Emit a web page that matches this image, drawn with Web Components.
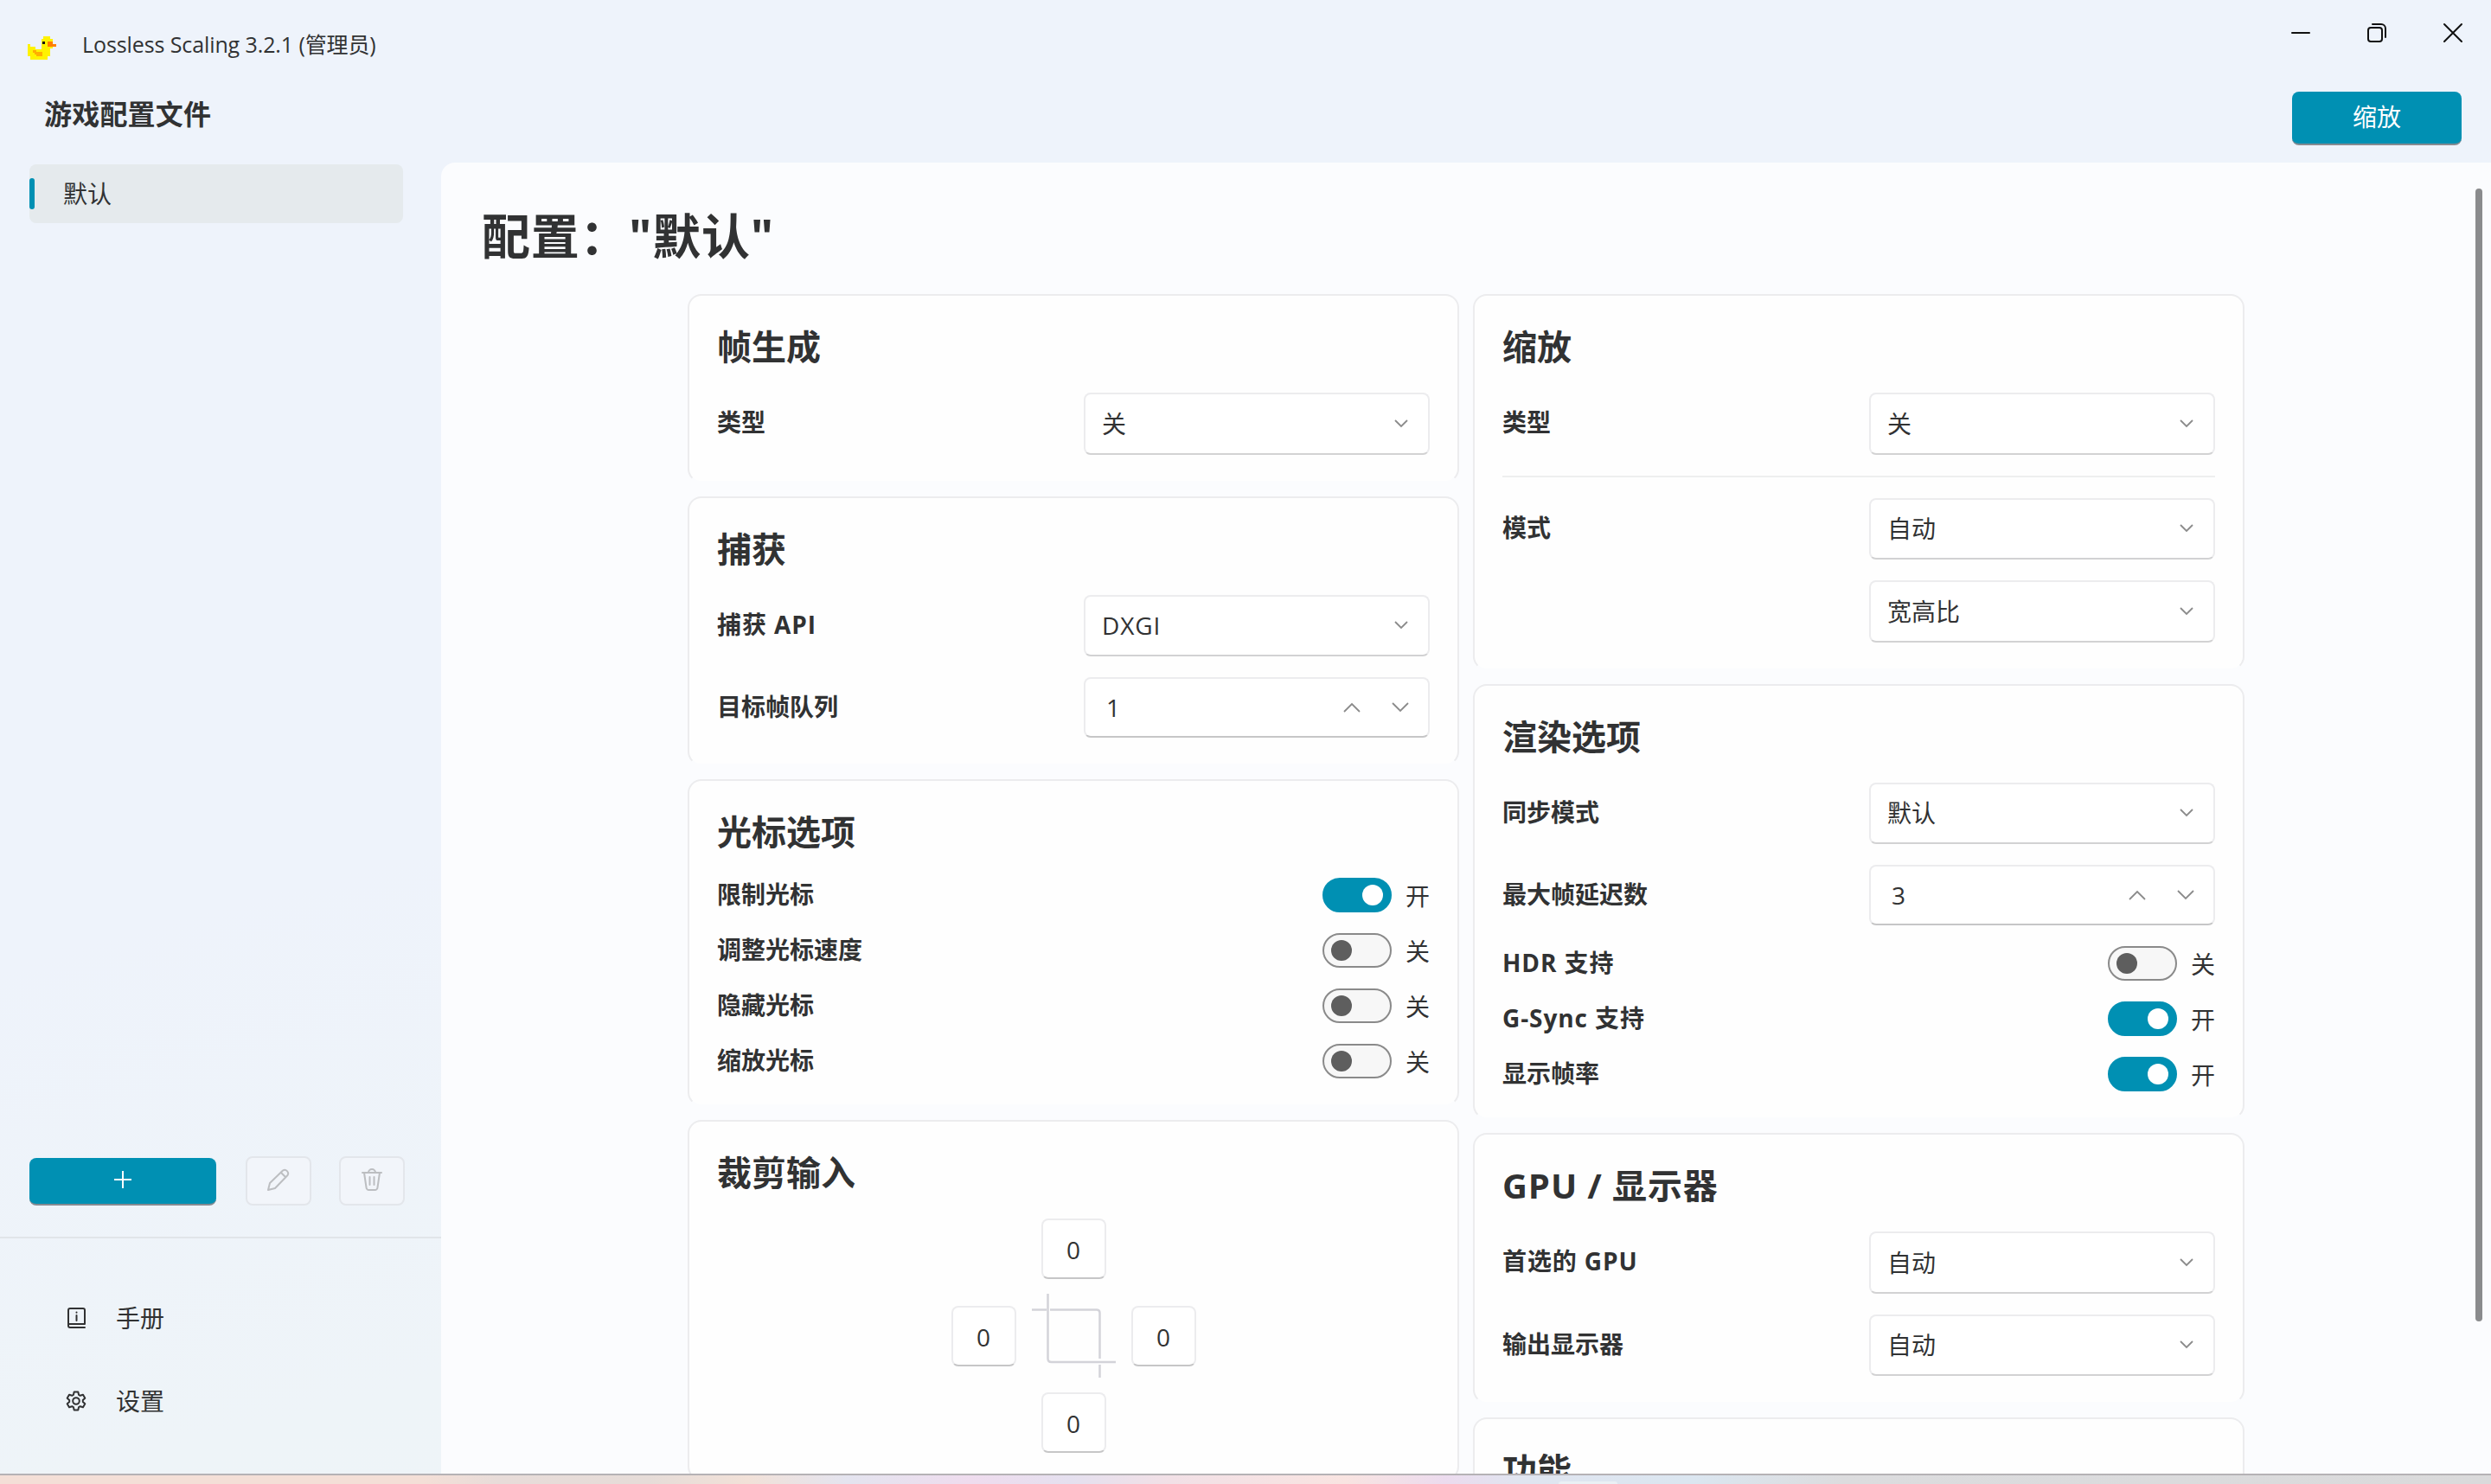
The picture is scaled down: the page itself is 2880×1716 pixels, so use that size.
<!DOCTYPE html>
<html lang="zh-CN">
<head>
<meta charset="utf-8">
<title>Lossless Scaling</title>
<style>
  html, body {
    margin: 0;
    height: 100%;
    overflow: hidden;
  }
  body {
    --accent: #0090b3;
    --text: #313233;
    --line: #ececee;
    font-family: "Open Sans", "Noto Sans CJK SC", sans-serif;
    font-size: 28px;
    line-height: 40px;
    color: var(--text);
  }
</style>
</head>
<body>
<app-window>
  <title-bar slot="title">Lossless Scaling 3.2.1 (管理员)</title-bar>
  <side-bar slot="side"></side-bar>
  <profile-page slot="page" name="默认">
    <div slot="left">
      <setting-card heading="帧生成">
        <setting-row label="类型"><combo-box>关</combo-box></setting-row>
      </setting-card>
      <setting-card heading="捕获">
        <setting-row label="捕获 API"><combo-box>DXGI</combo-box></setting-row>
        <setting-row label="目标帧队列"><number-box>1</number-box></setting-row>
      </setting-card>
      <setting-card heading="光标选项">
        <setting-row label="限制光标"><toggle-switch on></toggle-switch></setting-row>
        <setting-row label="调整光标速度"><toggle-switch></toggle-switch></setting-row>
        <setting-row label="隐藏光标"><toggle-switch></toggle-switch></setting-row>
        <setting-row label="缩放光标"><toggle-switch></toggle-switch></setting-row>
      </setting-card>
      <setting-card heading="裁剪输入"><crop-input></crop-input></setting-card>
    </div>
    <div slot="right">
      <setting-card heading="缩放">
        <setting-row label="类型"><combo-box>关</combo-box></setting-row>
        <hr>
        <setting-row label="模式"><combo-box>自动</combo-box></setting-row>
        <setting-row label=""><combo-box>宽高比</combo-box></setting-row>
      </setting-card>
      <setting-card heading="渲染选项">
        <setting-row label="同步模式"><combo-box>默认</combo-box></setting-row>
        <setting-row label="最大帧延迟数"><number-box>3</number-box></setting-row>
        <setting-row label="HDR 支持"><toggle-switch></toggle-switch></setting-row>
        <setting-row label="G-Sync 支持"><toggle-switch on></toggle-switch></setting-row>
        <setting-row label="显示帧率"><toggle-switch on></toggle-switch></setting-row>
      </setting-card>
      <setting-card heading="GPU / 显示器">
        <setting-row label="首选的 GPU"><combo-box>自动</combo-box></setting-row>
        <setting-row label="输出显示器"><combo-box>自动</combo-box></setting-row>
      </setting-card>
      <setting-card heading="功能"></setting-card>
    </div>
  </profile-page>
</app-window>

<script>
class BaseElement extends HTMLElement {
  constructor() {
    super();
    this.shadowDOM = this.attachShadow({ mode: "open" });
  }

  connectedCallback() {
    this.shadowDOM.innerHTML = this.render();
  }
}

const spacing = (text) => (/[A-Z]/.test(text) ? "letter-spacing: 0.9px" : "");

class AppWindow extends BaseElement {
  render() {
    return `
      <style>
        :host {
          display: flex;
          flex-direction: column;
          height: 1716px;
          width: 2880px;
        }
        .body {
          flex: 1;
          min-height: 0;
          display: grid;
          grid-template-columns: 510px 1fr;
          grid-template-rows: 188px 1fr;
          background: linear-gradient(165deg, #eef3fb 0%, #eef3fb 45%, #eef4f8 70%, #eff4f8 92%, #f1f3f9 100%);
          overflow: hidden;
        }
        slot[name=title] { display: block; grid-column: 1 / 3; }
        .side, .page { min-height: 0; min-width: 0; display: grid; }
        .desktop {
          height: 10px;
          display: flex;
          align-items: flex-end;
          border-top: 2px solid #b5b2b5;
          background: linear-gradient(90deg, #f4dfd7 0%, #f4dfd7 17%, #e8dcd9 20%, #e6dcd8 26%, #f2e1d8 30%, #e4e4ef 34%, #efdcee 39%, #e5e0ef 43%, #f2e0e6 47%, #f9e4e1 54%, #ecdbee 58%, #e0e5f0 61%, #dbe6f0 68%, #dcdcde 74%, #dadadb 100%);
        }
        .desktop i { width: 68px; height: 3px; margin-left: 1802px; border-radius: 4px 4px 0 0; background: #eaf0f5; }
      </style>
      <div class="body">
        <slot name="title"></slot>
        <div class="side"><slot name="side"></slot></div>
        <div class="page"><slot name="page"></slot></div>
      </div>
      <div class="desktop"><i></i></div>
    `;
  }
}

class TitleBar extends BaseElement {
  render() {
    return `
      <style>
        :host { display: flex; justify-content: space-between; height: 188px; }
        .left { padding: 31px 0 0 32px; }
        .name { display: flex; align-items: center; height: 40px; font-size: 25px; gap: 30px; letter-spacing: -0.1px; }
        .name svg { margin-top: 9px; }
        h2 { margin: 41px 0 0 19px; font-size: 32px; line-height: 40px; font-weight: 700; letter-spacing: 0.2px; }
        .right { display: flex; flex-direction: column; align-items: flex-end; padding: 26px 32px 0 0; }
        .controls { display: flex; gap: 64px; height: 24px; }
        button {
          margin: 56px 2px 0 0;
          width: 196px;
          height: 62px;
          padding: 0 0 2px;
          border: 0;
          border-bottom: 2px solid #858a91;
          border-radius: 8px;
          background: var(--accent);
          color: #fff;
          font: inherit;
        }
        .controls svg { fill: none; stroke: #111; stroke-width: 2; stroke-linecap: round; }
      </style>
      <div class="left">
        <div class="name">
          <svg width="33" height="27" viewBox="0 0 33 27" shape-rendering="crispEdges">
            <path fill="#fff200" d="M18 0h8v3h3v11h-3v9h-3v4H3v-4H0V9h3v3h6v3h7V3h2z"/>
            <path fill="#ffae00" d="M6 16h4v2h7v5h-7v-2H8v-2H6z"/>
            <path fill="#111" d="M17 6h3v3h-3z"/>
            <path fill="#ff7f00" d="M23 6h6v3h4v3h-10z"/>
          </svg>
          <span><slot></slot></span>
        </div>
        <h2>游戏配置文件</h2>
      </div>
      <div class="right">
        <div class="controls">
          <svg width="24" height="24"><path d="M2 12h20"/></svg>
          <svg width="24" height="24"><rect x="2" y="6" width="16" height="16" rx="3"/><path d="M7 2h10a5 5 0 0 1 5 5v10"/></svg>
          <svg width="24" height="24"><path d="M2 2l20 20M22 2L2 22"/></svg>
        </div>
        <button>缩放</button>
      </div>
    `;
  }
}

class SideBar extends BaseElement {
  render() {
    return `
      <style>
        :host { display: flex; flex-direction: column; height: 1516px; }
        .item {
          display: flex;
          align-items: center;
          gap: 33px;
          margin: 2px 44px 0 34px;
          height: 68px;
          border-radius: 8px;
          background: #e5eaed;
        }
        .item i { width: 6px; height: 36px; border-radius: 3px; background: var(--accent); }
        .actions { margin-top: auto; display: flex; align-items: flex-end; padding: 0 42px 36px 34px; }
        .actions div { box-sizing: border-box; display: flex; justify-content: center; align-items: center; border-radius: 8px; }
        .add { width: 216px; height: 55px; margin-right: 34px; padding-bottom: 4px; background: var(--accent); border-bottom: 2px solid #858a91; }
        .tool { width: 76px; height: 57px; padding-bottom: 3px; border: 2px solid #e3e6eb; background: #f2f5fa; }
        .tool + .tool { margin-left: 32px; }
        svg { fill: none; stroke-width: 2; stroke-linejoin: round; stroke-linecap: round; }
        .tool svg { stroke: #bcbec1; }
        .links { height: 274px; border-top: 2px solid #e1e5e9; box-sizing: border-box; padding: 44px 0 0 76px; }
        .link { display: flex; align-items: center; gap: 34px; height: 96px; }
        .link svg { stroke: #313233; }
      </style>
      <div class="item"><i></i><span>默认</span></div>
      <div class="actions">
        <div class="add"><svg width="20" height="20" stroke="#fff"><path d="M10 0v20M0 10h20"/></svg></div>
        <div class="tool">
          <svg width="26" height="26"><path d="M1 25l2-8L18 2.500a4 4 0 0 1 5.500 5.500L9 23zM16 5l5 5"/></svg>
        </div>
        <div class="tool">
          <svg width="24" height="26"><path d="M1 5h22M3 5l2.500 17a3 3 0 0 0 3 3h7a3 3 0 0 0 3-3L21 5M8 5a4 4 0 0 1 8 0M9.500 10v9M14.500 10v9"/></svg>
        </div>
      </div>
      <div class="links">
        <div class="link">
          <svg width="24" height="26"><path d="M22 20H3V4a2 2 0 0 1 2-2h15a2 2 0 0 1 2 2zM3 20v2a2 2 0 0 0 2 2h17M12.500 10v6M12.500 6.500v.2"/></svg>
          <span>手册</span>
        </div>
        <div class="link">
          <svg width="24" height="24"><circle cx="12" cy="12" r="3.800"/><path d="M9.700 1.500h4.600l.8 3.400 1.600.9 3.300-1 2.300 4-2.500 2.300v1.800l2.500 2.300-2.300 4-3.300-1-1.600.9-.8 3.400H9.700l-.8-3.400-1.600-.9-3.300 1-2.300-4 2.500-2.300v-1.800L1.700 8.800l2.300-4 3.300 1 1.600-.9z"/></svg>
          <span>设置</span>
        </div>
      </div>
    `;
  }
}

class ProfilePage extends BaseElement {
  render() {
    return `
      <style>
        :host {
          display: flex;
          flex-direction: column;
          position: relative;
          height: 1516px;
          border-top-left-radius: 16px;
          background: #fbfcfe;
          overflow: hidden;
        }
        h1 { flex: none; margin: 50px 0 0 47px; height: 102px; line-height: 68px; font-size: 56px; font-weight: 700; letter-spacing: 0.7px; }
        .columns { display: grid; grid-template-columns: 892px 892px; column-gap: 16px; padding-left: 285px; }
        .scroll { position: absolute; right: 10px; top: 30px; width: 8px; height: 1310px; border-radius: 4px; background: #8a8b8d; }
      </style>
      <h1>配置："${this.getAttribute("name")}"</h1>
      <div class="columns">
        <slot name="left"></slot>
        <slot name="right"></slot>
      </div>
      <div class="scroll"></div>
    `;
  }
}

class SettingCard extends BaseElement {
  render() {
    const heading = this.getAttribute("heading");
    return `
      <style>
        :host {
          display: block;
          box-sizing: border-box;
          margin-bottom: 16px;
          padding: 0 32px 30px;
          border: 2px solid var(--line);
          border-bottom-color: transparent;
          border-radius: 16px;
          background: #fefefe;
          background-clip: padding-box;
        }
        h3 { margin: 0; padding-top: 29px; height: 83px; line-height: 60px; font-size: 40px; font-weight: 700; }
        .rows { display: flex; flex-direction: column; gap: 24px; }
        ::slotted(hr) { width: 100%; height: 2px; margin: 0; border: 0; background: #eeefef; }
      </style>
      <h3 style="${spacing(heading)}">${heading}</h3>
      <div class="rows"><slot></slot></div>
    `;
  }
}

class SettingRow extends BaseElement {
  render() {
    const label = this.getAttribute("label");
    return `
      <style>
        :host { display: flex; justify-content: space-between; align-items: center; }
        .label { font-weight: 700; padding-bottom: 3px; line-height: 36px; }
      </style>
      <span class="label" style="${spacing(label)}">${label}</span>
      <slot></slot>
    `;
  }
}

// shared frame of the combo and number boxes
const fieldStyle = `
  :host {
    box-sizing: border-box;
    border: 2px solid var(--line);
    border-bottom-color: #d2d2d3;
    border-radius: 8px;
    background: #fff;
    display: flex;
    align-items: center;
  }
  svg { fill: none; stroke: #8b8b8b; stroke-width: 1.800; }
`;

class ComboBox extends BaseElement {
  render() {
    return `
      <style>
        ${fieldStyle}
        :host { width: 400px; height: 71.5px; padding: 0 23px 0 19px; justify-content: space-between; }
      </style>
      <span style="${spacing(this.textContent)}"><slot></slot></span>
      <svg width="16" height="10"><path d="M1 1l7 7 7-7"/></svg>
    `;
  }
}

class NumberBox extends BaseElement {
  render() {
    return `
      <style>
        ${fieldStyle}
        :host { width: 400px; height: 70px; padding: 0 22px 0 24px; gap: 36px; border-bottom-color: #c6c6c7; }
        span { flex: 1; }
      </style>
      <span><slot></slot></span>
      <svg width="20" height="12"><path d="M1 11l9-9 9 9"/></svg>
      <svg width="20" height="12"><path d="M1 1l9 9 9-9"/></svg>
    `;
  }
}

class ToggleSwitch extends BaseElement {
  render() {
    return `
      <style>
        :host { display: flex; align-items: center; gap: 16px; height: 40px; }
        .track {
          box-sizing: border-box;
          width: 80px;
          height: 40px;
          padding: 6px 8px;
          border: 2px solid #8a8a8a;
          border-radius: 20px;
          background: #f7f7f7;
          display: flex;
        }
        .track i { width: 24px; height: 24px; border-radius: 50%; background: #5e5e5e; }
        span { padding-top: 1px; }
        :host([on]) .track { background: var(--accent); border-color: var(--accent); justify-content: flex-end; }
        :host([on]) i { background: #fff; }
      </style>
      <div class="track"><i></i></div>
      <span>${this.hasAttribute("on") ? "开" : "关"}</span>
    `;
  }
}

class CropInput extends BaseElement {
  render() {
    return `
      <style>
        :host {
          display: grid;
          grid-template-columns: 75px 97px 75px;
          grid-template-rows: 70px 97px 70px;
          justify-content: center;
          align-items: center;
          justify-items: center;
          column-gap: 18px;
          row-gap: 17px;
        }
        div {
          box-sizing: border-box;
          width: 75px;
          height: 70px;
          line-height: 68px;
          text-align: center;
          border: 2px solid var(--line);
          border-bottom-color: #c6c6c7;
          border-radius: 8px;
          background: #fff;
        }
        .top { grid-area: 1 / 2; }
        .left { grid-area: 2 / 1; }
        svg { grid-area: 2 / 2; fill: none; stroke: #d3d3d9; stroke-width: 2.500; }
        .right { grid-area: 2 / 3; }
        .bottom { grid-area: 3 / 2; }
      </style>
      <div class="top">0</div>
      <div class="left">0</div>
      <svg width="97" height="97"><path d="M18.500 0v75q0 4 4 4H97M0 18.500h17M21 18.500h54q3.500 0 3.500 4V75M78.500 82v15"/></svg>
      <div class="right">0</div>
      <div class="bottom">0</div>
    `;
  }
}

customElements.define("app-window", AppWindow);
customElements.define("title-bar", TitleBar);
customElements.define("side-bar", SideBar);
customElements.define("profile-page", ProfilePage);
customElements.define("setting-card", SettingCard);
customElements.define("setting-row", SettingRow);
customElements.define("combo-box", ComboBox);
customElements.define("number-box", NumberBox);
customElements.define("toggle-switch", ToggleSwitch);
customElements.define("crop-input", CropInput);
</script>
</body>
</html>
